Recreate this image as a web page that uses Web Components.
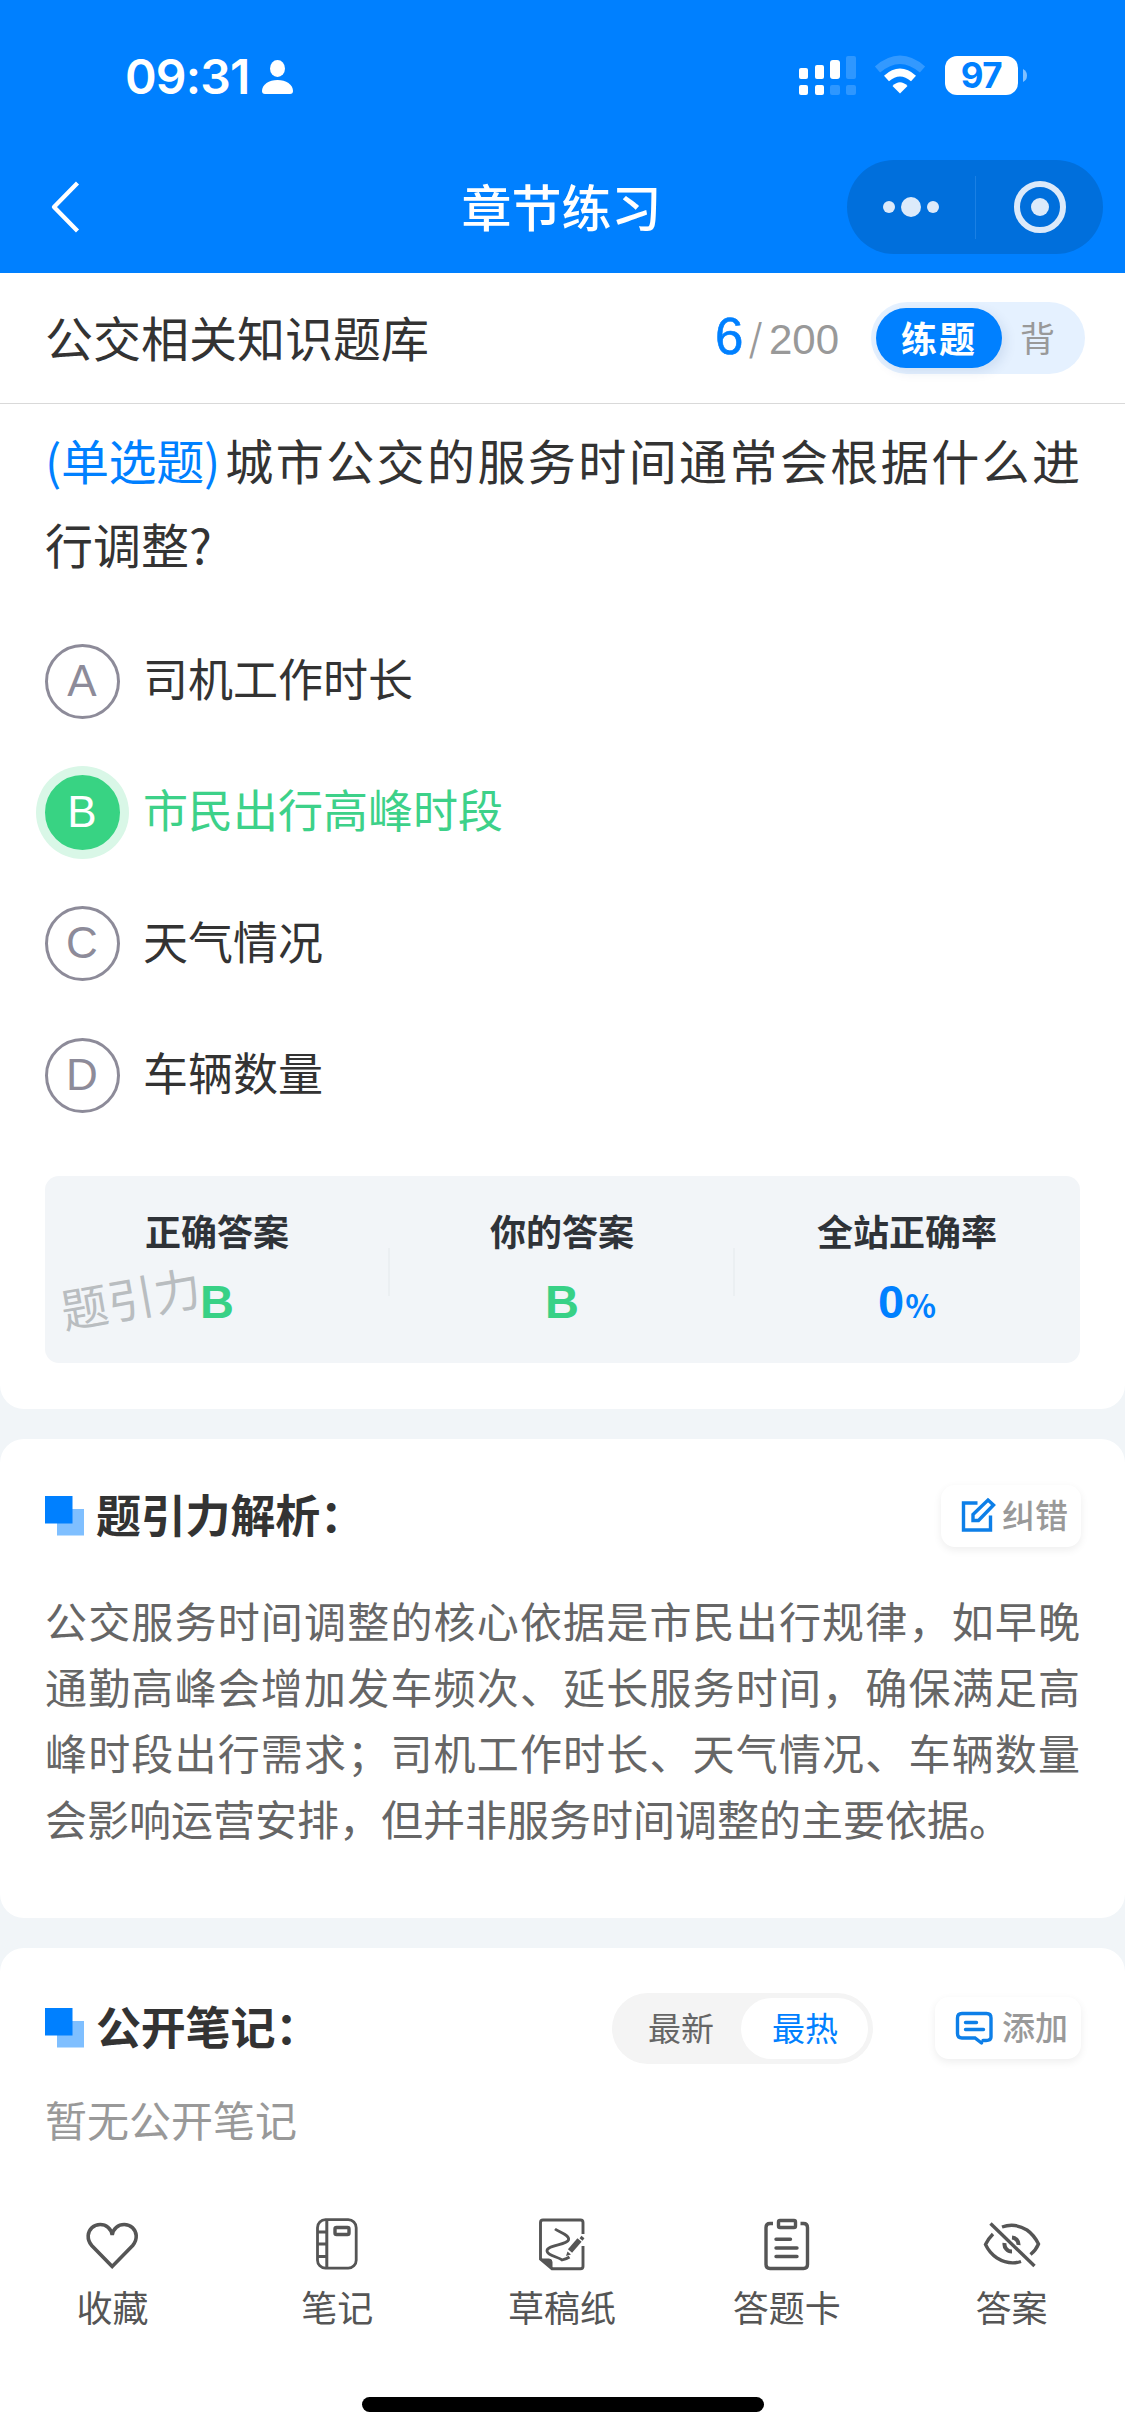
<!DOCTYPE html>
<html lang="zh-CN">
<head>
<meta charset="utf-8">
<title>章节练习</title>
<style>
html,body{margin:0;padding:0}
body{width:1125px;height:2436px;overflow:hidden;background:#fff;color:#333;font-family:"Noto Sans CJK SC","Liberation Sans",sans-serif}
</style>
</head>
<body>
<practice-app></practice-app>
<script>
const define=(name,html)=>{
  const t=document.createElement('template');
  t.innerHTML='<style>*{box-sizing:border-box}svg{display:block;overflow:visible;flex:none}</style>'+html;
  customElements.define(name,class extends HTMLElement{
    constructor(){super();this.attachShadow({mode:'open'}).appendChild(t.content.cloneNode(true));}
  });
};

define('status-bar',`
<style>
:host{display:flex;height:160px;padding:54px 98px 0 125px;align-items:flex-start;justify-content:space-between;color:#fff;font-family:Inter,sans-serif}
.left,.right{display:flex;align-items:flex-start}
.time{font-size:48px;font-weight:580;line-height:46px;letter-spacing:-.8px;width:137px;white-space:nowrap}
.left svg{margin-top:6px}
.right{padding-top:2px}
.wifi{margin-left:19px}
.batt{margin-left:20px;width:73px;height:39px;border-radius:12px;background:#fff;color:#0080ff;font-size:35px;font-weight:650;line-height:39px;text-align:center;letter-spacing:-.5px}
.cap{margin:13px 0 0 5px}
</style>
<div class="left"><span class="time">09:31</span>
<svg width="31" height="34" viewBox="0 0 31 34" fill="#fff"><ellipse cx="15.5" cy="8.500" rx="7.500" ry="8.500"/><path d="M3 34C1 34 0 33 0 31C0 24.500 7 20 15.500 20S31 24.500 31 31C31 33 30 34 28 34Z"/></svg></div>
<div class="right">
<svg width="57" height="39" viewBox="0 0 57 39" fill="#fff"><rect y="12" width="9" height="11" rx="2"/><rect x="16" y="9" width="9" height="14" rx="2"/><rect x="31" y="4" width="10" height="19" rx="3"/><rect x="47" width="10" height="23" rx="2" opacity=".18"/><rect y="29" width="9" height="10" rx="2"/><rect x="16" y="29" width="9" height="10" rx="2"/><rect x="31" y="29" width="10" height="10" rx="2" opacity=".18"/><rect x="47" y="29" width="10" height="10" rx="2" opacity=".18"/></svg>
<svg class="wifi" width="50" height="38" viewBox="0 0 50 38" fill="none" stroke="#fff"><path d="M2.500 13.500Q25-6 47.500 13.500" stroke-width="8" opacity=".2"/><path d="M11.500 22.500Q25 10.500 38.500 22.500" stroke-width="7.500"/><path d="M17.500 30Q25 22.500 32.500 30L25 37.500Z" fill="#fff" stroke="none"/></svg>
<div class="batt">97</div>
<svg class="cap" width="4" height="13" viewBox="0 0 4 13"><path d="M0 0Q4 2 4 6.500T0 13Z" fill="#fff" opacity=".5"/></svg>
</div>`);

define('nav-bar',`
<style>
:host{display:flex;height:113px;padding:0 22px 0 20px;align-items:flex-start;justify-content:space-between;color:#fff}
.side{flex:1 1 0;display:flex}
.back{margin:21px 0 0 31px}
h1{margin:18px 0 0;font-size:50px;line-height:54px;font-weight:500}
.end{justify-content:flex-end}
.capsule{width:256px;height:94px;border-radius:47px;background:#006fdc;display:flex;align-items:center;justify-content:space-between;padding:0 37px 0 36px}
.line{width:1px;height:63px;background:#1a80e4;margin-left:-3px}
</style>
<div class="side"><svg class="back" width="28" height="52" viewBox="0 0 28 52" fill="none" stroke="#fff" stroke-width="4.300"><path d="M26.500 2L3 26L26.500 50" stroke-linejoin="round"/></svg></div>
<h1>章节练习</h1>
<div class="side end"><div class="capsule">
<svg width="56" height="20" viewBox="0 0 56 20" fill="#dceafa"><circle cx="6" cy="10" r="6"/><circle cx="28" cy="10" r="10"/><circle cx="50" cy="10" r="6"/></svg>
<div class="line"></div>
<svg width="52" height="52" viewBox="0 0 52 52"><circle cx="26" cy="26" r="23" fill="none" stroke="#dceafa" stroke-width="6"/><circle cx="26" cy="26" r="9" fill="#dceafa"/></svg>
</div></div>`);

define('bank-header',`
<style>
:host{display:flex;height:131px;border-bottom:1px solid #d9d9d9;padding:0 40px 0 45px;align-items:center;background:#fff}
.name{font-size:48px;line-height:60px;margin-bottom:5px;flex:1}
.count{display:flex;align-items:baseline;font-family:"Liberation Sans",sans-serif;color:#999;font-size:42px;line-height:60px;margin-right:32px}
.count b{font-weight:400;font-size:51px;color:#0080ff;-webkit-text-stroke:.6px #0080ff}
.count i{font:300 42px/60px Inter,sans-serif;margin:0 6px 0 5px}
.toggle{display:flex;align-items:center;width:214px;height:72px;border-radius:36px;background:#e5f1ff;padding:0 5px}
.on{width:126px;height:60px;border-radius:30px;background:#0080ff;color:#fff;font-weight:700;font-size:36px;line-height:58px;text-align:center;letter-spacing:2px;box-shadow:4px 4px 12px rgba(0,60,130,.1)}
.off{font-size:35px;line-height:56px;margin-bottom:2px;color:#999;margin-left:18px}
</style>
<div class="name">公交相关知识题库</div>
<div class="count"><b>6</b><i>/</i><span>200</span></div>
<div class="toggle"><div class="on">练题</div><div class="off">背</div></div>`);

define('question-stem',`
<style>
:host{display:block;padding:13px 45px 0;font-size:48px;line-height:84px;text-align:justify}
.kind{display:inline-block;color:#0080ff;margin-right:3px;letter-spacing:-.3px;text-align:left;white-space:nowrap}
</style><span class="kind"><slot name="kind"></slot></span><slot></slot>`);

define('option-item',`
<style>
:host{display:flex;align-items:center;height:131.300px;padding-left:45px;font-size:45px}
.dot{width:75px;height:75px;border-radius:50%;border:3px solid #8d8b99;color:#8d8b99;font:44px/68px "Liberation Sans",sans-serif;text-align:center;margin:0 23px 1px 0;padding-right:1px}
.text{line-height:60px;margin-bottom:7px}
:host([correct]) .dot{background:#38d383;border-color:#38d383;color:#fff;box-shadow:0 0 0 9px #d9f7e7}
:host([correct]) .text{color:#3dd189}
</style><div class="dot"><slot name="key"></slot></div><div class="text"><slot></slot></div>`);

define('answer-summary',`
<style>
:host{display:flex;position:relative;height:187px;margin:35px 45px 0;border-radius:14px;background:#f2f5f8}
::slotted(*){flex:1}
.mark{position:absolute;left:15px;top:94px;font-size:47px;line-height:54px;color:#b9bdc0;transform:rotate(-10deg);white-space:nowrap}
</style><slot></slot><span class="mark">题引力</span>`);

define('summary-cell',`
<style>
:host{display:flex;flex-direction:column;align-items:center;position:relative;padding:30px 1px 0 0;color:#2f3338}
.label{font-size:36px;font-weight:700;line-height:48px}
.value{font:700 47px/60px "Liberation Sans",sans-serif;margin-top:18px;color:var(--tone,#38d186)}
:host(:not(:last-of-type))::after{content:"";position:absolute;right:0;top:72px;width:2px;height:48px;background:#ebeff2}
::slotted(small){font:600 32px "Noto Sans CJK SC",sans-serif;line-height:40px;margin-left:1px}
</style><div class="label"><slot name="label"></slot></div><div class="value"><slot></slot></div>`);

define('content-card',`
<style>
:host{display:block;background:#fff;border-radius:24px;overflow:hidden}
:host([first]){border-radius:0 0 24px 24px}
:host([last]){border-radius:24px 24px 0 0;flex:1}
</style><slot></slot>`);

define('section-head',`
<style>
:host{display:flex;align-items:center;height:80px;padding:0 44px 0 45px}
.title{font-size:45px;font-weight:700;line-height:60px;letter-spacing:-.2px;margin:0 auto 5px 11px}
</style>
<svg width="40" height="40" viewBox="0 0 40 40"><rect x="12" y="13" width="27" height="26.500" fill="#7fbfff"/><rect width="27.500" height="27.500" fill="#0080ff"/></svg>
<div class="title"><slot></slot></div><slot name="tools"></slot>`);

define('mini-button',`
<style>
:host{display:flex;align-items:center;height:62px;border-radius:14px;background:#fff;box-shadow:0 3px 9px rgba(0,0,0,.07);padding:0 13px 0 20px;color:#999;font-size:33px;line-height:48px}
.t{margin:0 0 4px 7px;font-weight:500}
</style><slot name="icon"></slot><div class="t"><slot></slot></div>`);

define('sort-toggle',`
<style>
:host{display:flex;align-items:center;height:71px;width:261px;border-radius:36px;background:#f4f4f4;padding:0 5px 0 36px;margin-right:62px;font-size:33px;line-height:48px;color:#666;justify-content:space-between}
.a{margin-bottom:3px}
.b{width:127px;height:61px;border-radius:31px;background:#fff;color:#0080ff;line-height:58px;text-align:center;padding-left:1px}
</style><div class="a">最新</div><div class="b">最热</div>`);

define('tab-item',`
<style>
:host{display:flex;flex-direction:column;align-items:center;flex:1;font-size:36px;line-height:48px;color:#555}
.l{margin-top:11px}
</style><slot name="icon"></slot><div class="l"><slot></slot></div>`);

define('tab-bar',`
<style>
:host{display:flex;flex-direction:column;align-items:center;height:244px;background:#fff;padding-top:25px}
.row{display:flex;width:100%;padding-right:1px}
.home{width:402px;height:15px;border-radius:8px;background:#000;margin-top:auto;margin-bottom:24px}
svg{fill:none;stroke:#555;stroke-width:3.400}
</style>
<div class="row">
<tab-item><svg slot="icon" width="54" height="54" viewBox="0 0 54 54"><path d="M27.200 49.500L6.700 28.500C3.700 25 3 22 3.200 18.500C3.700 12 8.700 7.500 15.200 7.500C21.200 7.500 26.200 11.500 27.200 18C28.200 11.500 33.200 7.500 39.200 7.500C45.700 7.500 50.700 12 51.200 18.500C51.400 22 50.700 25 47.700 28.500Z" stroke-width="3.600"/></svg>收藏</tab-item>
<tab-item><svg slot="icon" width="54" height="54" viewBox="0 0 54 54"><rect x="7.500" y="2.700" width="38.700" height="48.500" rx="8" stroke-width="2.800"/><path d="M16.800 2.700V51.200M7.500 15H16.800M7.500 27H16.800M7.500 39.500H16.800" stroke-width="3"/><rect x="25" y="10.500" width="14" height="7" rx="1.500"/></svg>笔记</tab-item>
<tab-item><svg slot="icon" width="54" height="54" viewBox="0 0 54 54"><path d="M48 17V5.500Q48 3 45.500 3H8Q5.500 3 5.500 5.500V42L17 51.700H45.500Q48 51.700 48 49.200V29" stroke-width="2.900"/><path d="M5.500 42H14Q17 42 17 45V51.700Z" fill="#555" stroke-width="1"/><path d="M20 12C24 15 35 18 33.500 23C32 28 13 28 12 33.500C11.500 38 23 40 27 43C31 42 33 41 34.500 40" stroke-width="2.800"/><path d="M35 34L44.500 23" stroke-width="5.500"/><path d="M31 39L32.500 34.500L36 37.500Z" fill="#555" stroke="none"/><path d="M45.500 20L48.500 22.500" stroke-width="3"/></svg>草稿纸</tab-item>
<tab-item><svg slot="icon" width="54" height="54" viewBox="0 0 54 54"><path d="M13 6.500H10Q6 6.500 6 10.500V47.500Q6 51.500 10 51.500H43.500Q47.500 51.500 47.500 47.500V10.500Q47.500 6.500 43.500 6.500H40.500"/><rect x="18.500" y="3.500" width="17" height="7" rx="1.500"/><path d="M16 22.300H30.500M16 31H37M16 39.500H37" stroke-linecap="round"/></svg>答题卡</tab-item>
<tab-item><svg slot="icon" width="54" height="54" viewBox="0 0 54 54"><path d="M17 10Q30 5.500 42 13Q49 18 53.500 27Q51 33 45.500 37.500M36 44.500Q24 48.500 12 41Q4.500 36 .5 27.500Q3 22 8 17"/><path d="M27 20.500A7 7 0 0 1 33.500 28M19.500 26A7.500 7.500 0 0 0 27 34.500" stroke-width="4"/><path d="M5.500 6.500L49.500 49"/></svg>答案</tab-item>
</div><div class="home"></div>`);

define('practice-app',`
<style>
:host{display:flex;flex-direction:column;width:1125px;height:2436px;background:#f1f5f8}
header{background:#0080ff}
main{flex:1;min-height:0;display:flex;flex-direction:column;gap:30px}
.stem-gap{height:31px}
.p{margin:31px 45px 0;font-size:42px;line-height:66px;color:#666;text-align:justify}
.explain{height:479px;padding-top:37px}
.notes{padding-top:40px}
.empty{margin:21px 45px 0;font-size:42px;line-height:60px;color:#999}
.blue{fill:none;stroke:#0d7fe8;stroke-width:3.400}
</style>
<header><status-bar></status-bar><nav-bar></nav-bar></header>
<bank-header></bank-header>
<main>
<content-card first style="height:1005px;flex:none">
<question-stem><span slot="kind">(单选题)</span>城市公交的服务时间通常会根据什么进行调整?</question-stem>
<div class="stem-gap"></div>
<option-item><span slot="key">A</span>司机工作时长</option-item>
<option-item correct><span slot="key">B</span>市民出行高峰时段</option-item>
<option-item><span slot="key">C</span>天气情况</option-item>
<option-item><span slot="key">D</span>车辆数量</option-item>
<answer-summary>
<summary-cell><span slot="label">正确答案</span>B</summary-cell>
<summary-cell><span slot="label">你的答案</span>B</summary-cell>
<summary-cell style="--tone:#0080ff"><span slot="label">全站正确率</span>0<small>%</small></summary-cell>
</answer-summary>
</content-card>
<content-card style="flex:none"><div class="explain">
<section-head>题引力解析：<mini-button slot="tools"><svg slot="icon" class="blue" width="34" height="34" viewBox="0 0 34 34"><path d="M16.500 4H2.500V31H29.500V16.500M27 1L32.500 6L17.500 21.500H12V15.500Z"/></svg>纠错</mini-button></section-head>
<div class="p">公交服务时间调整的核心依据是市民出行规律，如早晚通勤高峰会增加发车频次、延长服务时间，确保满足高峰时段出行需求；司机工作时长、天气情况、车辆数量会影响运营安排，但并非服务时间调整的主要依据。</div>
</div></content-card>
<content-card last><div class="notes">
<section-head>公开笔记：<sort-toggle slot="tools"></sort-toggle><mini-button slot="tools"><svg slot="icon" class="blue" width="40" height="34" viewBox="0 0 40 34"><path d="M28 29.500H31Q36 29.500 36 26V7Q36 2.500 31.500 2.500H7Q2.500 2.500 2.500 7V22.500Q2.500 27 7 27H20L26.500 32M10.500 11.500H21.500M10.500 18.500H28.500" stroke-linecap="round"/></svg>添加</mini-button></section-head>
<div class="empty">暂无公开笔记</div>
</div></content-card>
</main>
<tab-bar></tab-bar>`);
</script>
</body>
</html>
